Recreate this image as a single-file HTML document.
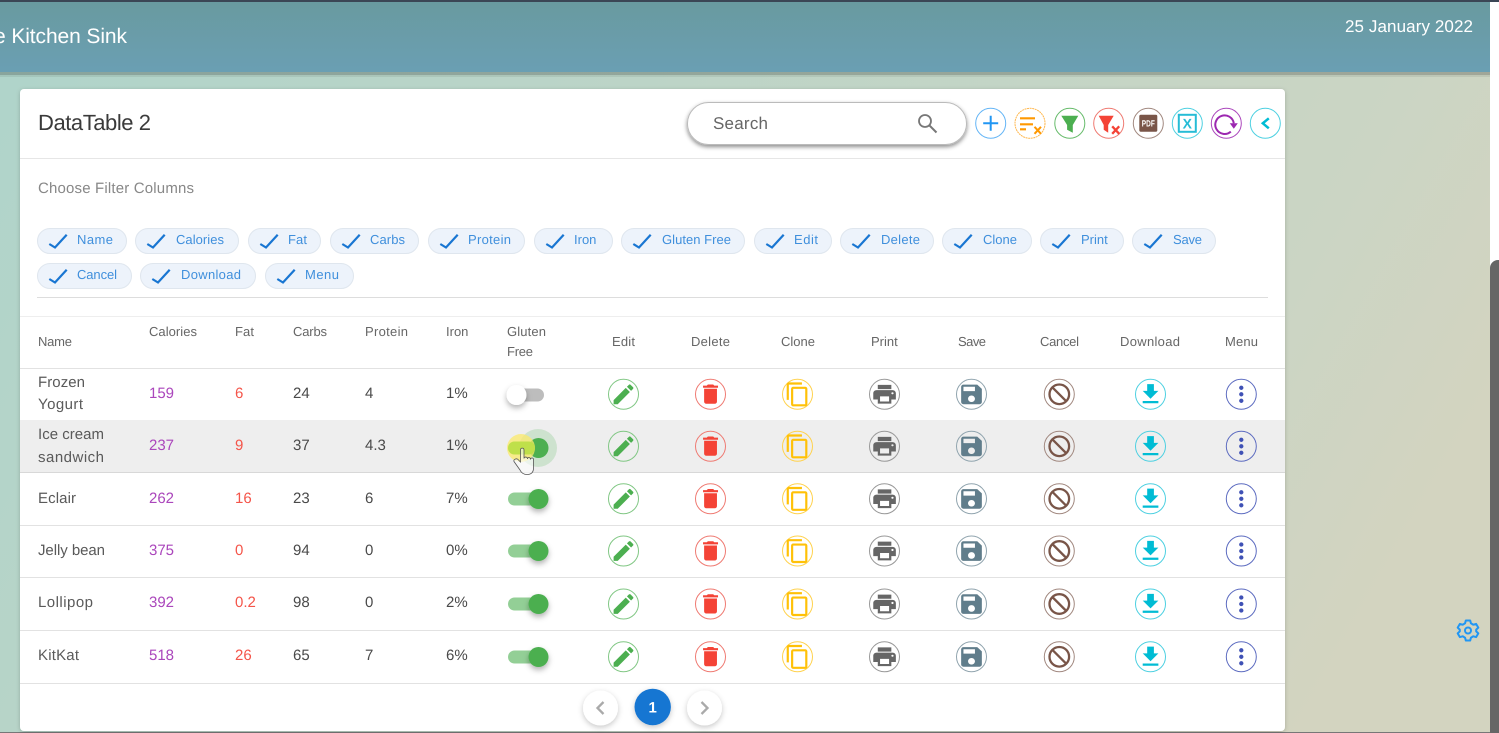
<!DOCTYPE html>
<html lang="en"><head><meta charset="utf-8"><title>DataTable 2</title>
<style>
html,body{margin:0;padding:0;width:1499px;height:733px;overflow:hidden;background:#fff}
svg{display:block;font-family:"Liberation Sans",sans-serif;text-rendering:geometricPrecision}
.h{font-size:13px;fill:#666}
.n{font-size:15px;fill:#5a5a5a}
.v{font-size:15px;fill:#4a4a4a}
.p{font-size:15px;fill:#ab47bc}
.f{font-size:15px;fill:#f4554a}
.c{font-size:13px;fill:#3f8fdc}
.ci{fill:none;stroke-width:1}
</style></head><body>
<svg width="1499" height="733" viewBox="0 0 1499 733" xmlns="http://www.w3.org/2000/svg">
<defs>
<linearGradient id="bg" gradientUnits="userSpaceOnUse" x1="0" y1="0" x2="1300" y2="733"><stop offset="0" stop-color="#afd4ca"/><stop offset=".85" stop-color="#cbd5c4"/><stop offset="1.0" stop-color="#d3d4c0"/></linearGradient>
<linearGradient id="hd" x1="0" y1="0" x2="0" y2="1"><stop offset="0" stop-color="#699a9f"/><stop offset="1" stop-color="#6a9fb3"/></linearGradient>
<filter id="s1" x="-10%" y="-30%" width="120%" height="170%"><feDropShadow dx="0" dy="2" stdDeviation="2" flood-color="#000" flood-opacity=".45"/></filter>
<filter id="s2" x="-40%" y="-40%" width="180%" height="180%"><feDropShadow dx="0" dy="2" stdDeviation="3" flood-color="#000" flood-opacity=".22"/></filter>
<filter id="s3" x="-60%" y="-60%" width="220%" height="220%"><feDropShadow dx="0" dy="3" stdDeviation="3" flood-color="#000" flood-opacity=".3"/></filter>
<filter id="s4" x="-5%" y="-5%" width="110%" height="110%"><feDropShadow dx="0" dy="1" stdDeviation="2" flood-color="#000" flood-opacity=".2"/></filter>
<path id="k" d="M12.3 244L18 247.500L29.700 234.700" fill="none" stroke="#1976d2" stroke-width="2.200"/>
<g id="r">
<g transform="translate(623.500 0)"><circle class="ci" r="15" stroke="#81c784"/><path transform="translate(-13.200 -13.200) scale(1.100)" fill="#4caf50" d="M3 17.250V21h3.750L17.810 9.940l-3.750-3.750L3 17.250zM20.710 7.040c.39-.39.39-1.020 0-1.410l-2.340-2.340c-.39-.39-1.020-.39-1.410 0l-1.830 1.830 3.750 3.750 1.830-1.830z"/></g>
<g transform="translate(710.500 0)"><circle class="ci" r="15" stroke="#ef7a72"/><path transform="translate(-12.800 -13) scale(1.070)" fill="#f44336" d="M6 19c0 1.100.9 2 2 2h8c1.100 0 2-.9 2-2V7H6v12zM19 4h-3.500l-1-1h-5l-1 1H5v2h14V4z"/></g>
<g transform="translate(797.500 0)"><circle class="ci" r="15" stroke="#ffd24d"/><path transform="translate(-13 -13) scale(1.090)" fill="#ffc107" d="M16 1H4c-1.100 0-2 .9-2 2v14h2V3h12V1zm3 4H8c-1.100 0-2 .9-2 2v14c0 1.100.9 2 2 2h11c1.100 0 2-.9 2-2V7c0-1.100-.9-2-2-2zm0 16H8V7h11v14z"/></g>
<g transform="translate(884.500 0)"><circle class="ci" r="15" stroke="#999"/><path transform="translate(-13.500 -12.500) scale(1.130 1.040)" fill="#666" d="M19 8H5c-1.660 0-3 1.340-3 3v6h4v4h12v-4h4v-6c0-1.660-1.340-3-3-3zm-3 11H8v-5h8v5zm3-7c-.55 0-1-.45-1-1s.45-1 1-1 1 .45 1 1-.45 1-1 1zm-1-9H6v4h12V3z"/></g>
<g transform="translate(971.500 0)"><circle class="ci" r="15" stroke="#90a4ae"/><path transform="translate(-13.800 -13) scale(1.150 1.090)" fill="#607d8b" d="M17 3H5c-1.110 0-2 .9-2 2v14c0 1.100.89 2 2 2h14c1.100 0 2-.9 2-2V7l-4-4zm-5 16c-1.660 0-3-1.340-3-3s1.340-3 3-3 3 1.340 3 3-1.340 3-3 3zm3-10H5V5h10v4z"/></g>
<g transform="translate(1059.300 0)"><circle class="ci" r="15" stroke="#a1887f"/><circle r="9.800" fill="none" stroke="#795548" stroke-width="2.300"/><path d="M-7-7L7 7" stroke="#795548" stroke-width="2.300"/></g>
<g transform="translate(1150.500 0)"><circle class="ci" r="15" stroke="#4dd0e1"/><path transform="translate(-13.400 -13.500) scale(1.120)" fill="#00bcd4" d="M19 9h-4V3H9v6H5l7 7 7-7zM5 18v2h14v-2H5z"/></g>
<g transform="translate(1241.300 0)"><circle class="ci" r="15" stroke="#5c6bc0"/><path transform="translate(-13 -13) scale(1.083)" fill="#3f51b5" d="M12 8c1.100 0 2-.9 2-2s-.9-2-2-2-2 .9-2 2 .9 2 2 2zm0 2c-1.100 0-2 .9-2 2s.9 2 2 2 2-.9 2-2-.9-2-2-2zm0 6c-1.100 0-2 .9-2 2s.9 2 2 2 2-.9 2-2-.9-2-2-2z"/></g>
</g>
<g id="on"><rect x="508" y="-6.500" width="32" height="13" rx="6.500" fill="#93cf96"/><circle cx="538.500" cy="0" r="10" fill="#4caf50" filter="url(#s3)"/></g>
</defs>

<rect width="1490" height="733" fill="url(#bg)"/>
<path d="M1490 733V268a8 8 0 0 1 8-8h1V733z" fill="#666"/>
<rect y="732" width="1490" height="1" fill="#777"/>
<rect y="72" width="1490" height="3" fill="#000" opacity=".22"/>
<rect y="75" width="1490" height="2" fill="#000" opacity=".07"/>
<rect y="0" width="1490" height="72" fill="url(#hd)"/>
<rect y="0" width="1499" height="2" fill="#3b4655"/>
<text x="-6" y="43" font-size="21" fill="#fff" textLength="133">e Kitchen Sink</text>
<text x="1345" y="32" font-size="17" fill="#fff" textLength="128">25 January 2022</text>

<rect x="20" y="89" width="1265" height="642" rx="4" fill="#fff" filter="url(#s4)"/>
<text x="38" y="130" font-size="22" fill="#3a3a3a" textLength="113">DataTable 2</text>

<rect x="687.500" y="102.500" width="279" height="42" rx="21" fill="#fff" stroke="#bbb" filter="url(#s1)"/>
<text x="713" y="129" font-size="17" fill="#666" textLength="55">Search</text>
<circle cx="925" cy="121" r="6" fill="none" stroke="#777" stroke-width="1.800"/>
<path d="M929.500 125.500L936.500 132.500" stroke="#777" stroke-width="2"/>

<!-- toolbar -->
<g transform="translate(990.700 123.300)"><circle class="ci" r="15" stroke="#64b5f6"/><path d="M-7.500 0H7.500M0-7.500V7.500" stroke="#2196f3" stroke-width="2" fill="none"/></g>
<g transform="translate(1030 123.300)"><circle class="ci" r="15" stroke="#ffb74d" stroke-dasharray="2 .6"/><path d="M-10-5H5M-10 1H3M-10 6H-4" stroke="#ff9800" stroke-width="2.200" fill="none"/><path d="M4.500 3.500L11 10.500M11 3.500L4.500 10.500" stroke="#ff9800" stroke-width="2" fill="none"/></g>
<g transform="translate(1069.800 123.300)"><circle class="ci" r="15" stroke="#66bb6a"/><path d="M-8.500-7.600H8.500L3 1.700V9.400L-2.700 6.500V1.700Z" fill="#4caf50"/></g>
<g transform="translate(1108.700 123.300)"><circle class="ci" r="15" stroke="#ef7a72"/><path d="M-10-7.600H5L-.5 1.700V9.400L-5 6.500V1.700Z" fill="#f44336"/><path d="M3.500 3L10.500 10.500M10.500 3L3.500 10.500" stroke="#f44336" stroke-width="2.300" fill="none"/></g>
<g transform="translate(1148.300 123.300)"><circle class="ci" r="15" stroke="#a1887f"/><rect x="-9" y="-8.500" width="18" height="17" rx="1.500" fill="#795548"/><text x="0" y="3.300" font-size="9" font-weight="bold" fill="#fff" text-anchor="middle" textLength="13" lengthAdjust="spacingAndGlyphs">PDF</text></g>
<g transform="translate(1187.300 123.300)"><circle class="ci" r="15" stroke="#4dd0e1"/><rect x="-8.500" y="-8.500" width="17" height="17" fill="none" stroke="#26bcd6" stroke-width="2"/><text x="0" y="5" font-size="14" font-weight="bold" fill="#26bcd6" text-anchor="middle">X</text></g>
<g transform="translate(1226.300 123.300)"><circle class="ci" r="15" stroke="#ab47bc"/><path d="M4.500 8.300A9.300 9.300 0 1 1 7.500 0" fill="none" stroke="#9c27b0" stroke-width="2"/><path d="M3.500 0H11.500L7.500 5.500Z" fill="#9c27b0"/></g>
<g transform="translate(1265.300 123.300)"><circle class="ci" r="15" stroke="#4dd0e1"/><path d="M3.500-5L-2.500 0L3.500 5" fill="none" stroke="#00bcd4" stroke-width="2.500"/></g>

<rect x="20" y="158" width="1265" height="1" fill="#e6e6e6"/>
<text x="38" y="193" font-size="15" fill="#888" textLength="156">Choose Filter Columns</text>

<!-- chips -->
<g fill="#edf3fb" stroke="#dfe6ee">
<rect x="37.500" y="228.500" width="89" height="25" rx="12.500"/>
<rect x="135.500" y="228.500" width="103" height="25" rx="12.500"/>
<rect x="248.500" y="228.500" width="72" height="25" rx="12.500"/>
<rect x="330.500" y="228.500" width="88" height="25" rx="12.500"/>
<rect x="428.500" y="228.500" width="96" height="25" rx="12.500"/>
<rect x="534.500" y="228.500" width="78" height="25" rx="12.500"/>
<rect x="621.500" y="228.500" width="123" height="25" rx="12.500"/>
<rect x="754.500" y="228.500" width="77" height="25" rx="12.500"/>
<rect x="840.500" y="228.500" width="93" height="25" rx="12.500"/>
<rect x="942.500" y="228.500" width="89" height="25" rx="12.500"/>
<rect x="1040.500" y="228.500" width="83" height="25" rx="12.500"/>
<rect x="1132.500" y="228.500" width="83" height="25" rx="12.500"/>
<rect x="37.500" y="263.500" width="94" height="25" rx="12.500"/>
<rect x="140.500" y="263.500" width="115" height="25" rx="12.500"/>
<rect x="265.500" y="263.500" width="88" height="25" rx="12.500"/>
</g>
<use href="#k" x="37"/><use href="#k" x="135"/><use href="#k" x="248"/><use href="#k" x="330"/><use href="#k" x="428"/><use href="#k" x="534"/><use href="#k" x="621"/><use href="#k" x="754"/><use href="#k" x="840"/><use href="#k" x="942"/><use href="#k" x="1040"/><use href="#k" x="1132"/>
<use href="#k" x="37" y="35"/><use href="#k" x="140" y="35"/><use href="#k" x="265" y="35"/>
<text class="c" x="77" y="244" textLength="36">Name</text>
<text class="c" x="176" y="244" textLength="48">Calories</text>
<text class="c" x="288" y="244" textLength="19">Fat</text>
<text class="c" x="370" y="244" textLength="35">Carbs</text>
<text class="c" x="468" y="244" textLength="43">Protein</text>
<text class="c" x="574" y="244">Iron</text>
<text class="c" x="662" y="244" textLength="69">Gluten Free</text>
<text class="c" x="794" y="244" textLength="24">Edit</text>
<text class="c" x="881" y="244" textLength="39">Delete</text>
<text class="c" x="983" y="244" textLength="34">Clone</text>
<text class="c" x="1081" y="244">Print</text>
<text class="c" x="1173" y="244" textLength="29">Save</text>
<text class="c" x="77" y="279" textLength="40">Cancel</text>
<text class="c" x="181" y="279" textLength="60">Download</text>
<text class="c" x="305" y="279" textLength="34">Menu</text>

<rect x="37" y="297" width="1231" height="1" fill="#ddd"/>
<rect x="20" y="316" width="1265" height="1" fill="#eee"/>

<!-- header row -->
<text class="h" x="38" y="346" textLength="34">Name</text>
<text class="h" x="149" y="336" textLength="48">Calories</text>
<text class="h" x="235" y="336" textLength="19">Fat</text>
<text class="h" x="293" y="336" textLength="34">Carbs</text>
<text class="h" x="365" y="336" textLength="43">Protein</text>
<text class="h" x="446" y="336">Iron</text>
<text class="h" x="507" y="336" textLength="39">Gluten</text>
<text class="h" x="507" y="356" textLength="26">Free</text>
<text class="h" x="612" y="346" textLength="23">Edit</text>
<text class="h" x="691" y="346" textLength="39">Delete</text>
<text class="h" x="781" y="346" textLength="34">Clone</text>
<text class="h" x="871" y="346">Print</text>
<text class="h" x="958" y="346" textLength="28">Save</text>
<text class="h" x="1040" y="346" textLength="39">Cancel</text>
<text class="h" x="1120" y="346" textLength="60">Download</text>
<text class="h" x="1225" y="346" textLength="33">Menu</text>

<!-- row separators -->
<rect x="20" y="420" width="1265" height="53" fill="#eee"/>
<g fill="#e2e2e2">
<rect x="20" y="368" width="1265" height="1"/>
<rect x="20" y="472" width="1265" height="1" fill="#d8d8d8"/>
<rect x="20" y="525" width="1265" height="1"/>
<rect x="20" y="577" width="1265" height="1"/>
<rect x="20" y="630" width="1265" height="1"/>
<rect x="20" y="683" width="1265" height="1"/>
</g>

<!-- row text -->
<text class="n" x="38" y="387" textLength="47">Frozen</text>
<text class="n" x="38" y="409" textLength="45">Yogurt</text>
<text class="n" x="38" y="439" textLength="66">Ice cream</text>
<text class="n" x="38" y="462" textLength="66">sandwich</text>
<text class="n" x="38" y="503" textLength="38">Eclair</text>
<text class="n" x="38" y="555" textLength="67">Jelly bean</text>
<text class="n" x="38" y="607" textLength="55">Lollipop</text>
<text class="n" x="38" y="660" textLength="41">KitKat</text>

<text class="p" x="149" y="398">159</text>
<text class="p" x="149" y="450">237</text>
<text class="p" x="149" y="503">262</text>
<text class="p" x="149" y="555">375</text>
<text class="p" x="149" y="607">392</text>
<text class="p" x="149" y="660">518</text>

<text class="f" x="235" y="398">6</text>
<text class="f" x="235" y="450">9</text>
<text class="f" x="235" y="503">16</text>
<text class="f" x="235" y="555">0</text>
<text class="f" x="235" y="607">0.2</text>
<text class="f" x="235" y="660">26</text>

<text class="v" x="293" y="398">24</text>
<text class="v" x="293" y="450">37</text>
<text class="v" x="293" y="503">23</text>
<text class="v" x="293" y="555">94</text>
<text class="v" x="293" y="607">98</text>
<text class="v" x="293" y="660">65</text>

<text class="v" x="365" y="398">4</text>
<text class="v" x="365" y="450">4.3</text>
<text class="v" x="365" y="503">6</text>
<text class="v" x="365" y="555">0</text>
<text class="v" x="365" y="607">0</text>
<text class="v" x="365" y="660">7</text>

<text class="v" x="446" y="398">1%</text>
<text class="v" x="446" y="450">1%</text>
<text class="v" x="446" y="503">7%</text>
<text class="v" x="446" y="555">0%</text>
<text class="v" x="446" y="607">2%</text>
<text class="v" x="446" y="660">6%</text>

<!-- toggles -->
<rect x="508" y="388.500" width="36" height="13" rx="6.500" fill="#bdbdbd"/>
<circle cx="516.500" cy="395" r="10" fill="#fff" filter="url(#s3)"/>

<circle cx="538" cy="448" r="19" fill="#81c784" opacity=".3"/>
<rect x="508" y="441.500" width="32" height="13" rx="6.500" fill="#93cf96"/>
<circle cx="538.500" cy="448" r="10" fill="#4caf50"/>
<circle cx="521" cy="448" r="14" fill="#fbe96a" opacity=".75"/>
<rect x="508" y="441.500" width="27" height="13" rx="6.500" fill="#bfe04a"/>
<path d="M520.500 450V462L518 459.500C516.500 458 513 459.500 514 461.500L520 470Q522 474.500 527 474.500Q533.500 474.500 533.500 468V459.500C533.500 457.500 530.500 457.500 530.500 459.500C530.500 457 527.500 457 527.500 459C527.500 456.500 524 456.500 524 458.500V450C524 447.500 520.500 447.500 520.500 450Z" fill="#fff" fill-opacity=".6" stroke="#555" stroke-width=".8"/>

<use href="#on" y="499"/>
<use href="#on" y="551"/>
<use href="#on" y="604"/>
<use href="#on" y="657"/>

<!-- action icons -->
<use href="#r" y="394.300"/>
<use href="#r" y="446.300"/>
<use href="#r" y="498.800"/>
<use href="#r" y="551"/>
<use href="#r" y="604"/>
<use href="#r" y="656.800"/>

<!-- pagination -->
<circle cx="600.500" cy="708" r="17.500" fill="#fff" filter="url(#s2)"/>
<path d="M603.500 702L597.500 708L603.500 714" fill="none" stroke="#aaa" stroke-width="2.300"/>
<circle cx="652.700" cy="707" r="18.200" fill="#1976d2" filter="url(#s2)"/>
<text x="652.700" y="712.500" font-size="15" font-weight="bold" fill="#fff" text-anchor="middle">1</text>
<circle cx="704.500" cy="708" r="17.500" fill="#fff" filter="url(#s2)"/>
<path d="M701.500 702L707.500 708L701.500 714" fill="none" stroke="#aaa" stroke-width="2.300"/>

<!-- gear -->
<g transform="translate(1468 630.500)" fill="none" stroke="#2196f3" stroke-width="2">
<circle r="3"/>
<path d="M-2.200-10H2.200L2.900-7.200L5.300-5.800L8.100-6.600L10.300-2.900L8.200-.9V.9L10.300 2.900L8.100 6.600L5.300 5.800L2.900 7.200L2.200 10H-2.200L-2.900 7.200L-5.300 5.800L-8.100 6.600L-10.300 2.900L-8.200 .9V-.9L-10.300-2.900L-8.100-6.600L-5.300-5.800L-2.900-7.200Z" stroke-linejoin="round"/>
</g>
</svg>
</body></html>
